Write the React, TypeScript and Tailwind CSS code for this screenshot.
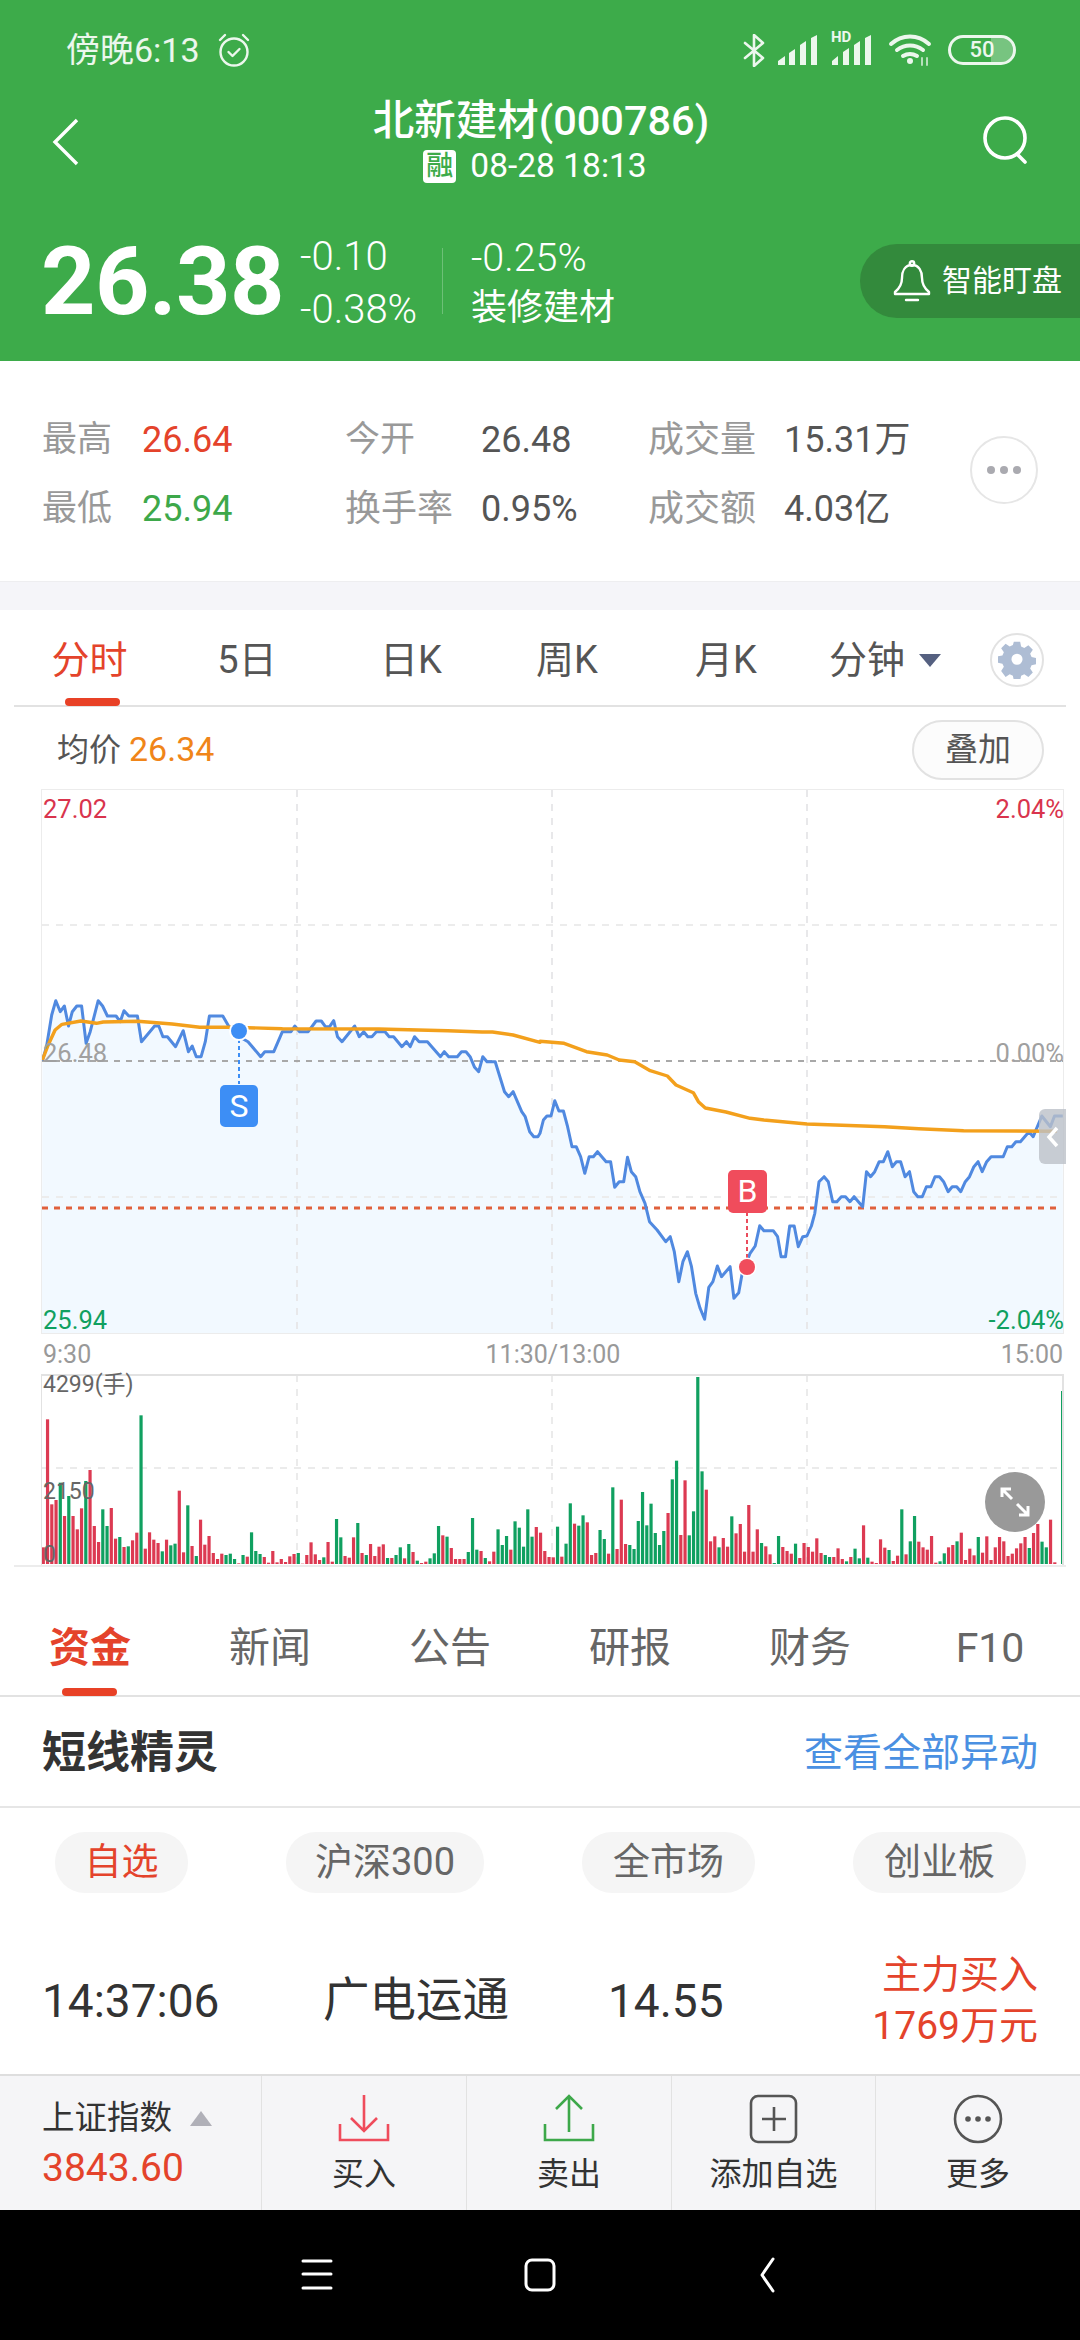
import React from "react";

const blueA = "123,242 135,200 150,105 162,62 175,95 187,78 199,138 210,95 223,78 237,78 250,190 262,155 285,62 298,78 312,108 337,108 349,125 360,92 374,108 399,108 411,185 449,138 461,138 473,170 486,170 510,200 532,152 547,215 558,198 570,230 584,230 596,185 608,108 647,108 665,140 695,170 720,185 757,230 769,215 795,215 820,155 845,155 856,138 870,155 895,155 918,123 933,123 945,140 957,140 969,122 980,170 993,185 1030,138 1043,170 1056,155 1068,170 1080,170 1093,155 1118,155 1130,170 1143,170 1167,200 1180,185 1191,200 1204,170 1217,185 1241,185 1279,230 1290,215 1303,230 1328,230 1340,215 1353,215 1365,230 1378,262 1390,275 1402,230 1414,245 1438,245 1465,335 1477,350 1490,335 1515,395 1525,410 1538,455 1550,470 1562,470";
const blueB = "0,460 10,420 20,408 32,408 43,362 55,393 68,393 80,440 93,500 105,500 118,530 130,580 143,530 155,530 167,515 192,545 205,545 217,622 230,605 243,605 254,532 265,575 278,590 290,635 305,670 318,725 340,750 365,785 378,770 390,815 403,905 415,845 428,815 440,860 452,940 465,985 478,1018 490,922 502,905 515,858 527,890 552,860 563,955 577,938 587,880 610,820 625,798 638,737 650,752 677,752 690,770 700,830 713,830 725,738 738,738 750,800 763,770 775,768 788,738 798,700 810,605 825,590 837,605 850,665 862,665 875,650 887,650 900,665 912,650 937,680 948,575 960,590 972,575 985,545 997,545 1010,515 1023,560 1035,545 1047,545 1060,590 1073,575 1085,635 1097,650 1110,650 1122,620 1135,620 1147,590 1160,590 1172,605 1185,635 1197,620 1210,620 1222,635 1235,605 1247,590 1260,560 1272,545 1284,575 1297,545 1310,530 1345,530 1357,500 1370,500 1382,485 1395,485 1420,455 1432,470 1457,408 1482,440 1494,408 1518,408";
const yellowA = "123,240 140,195 160,150 180,133 235,123 280,130 300,126 400,124 500,132 580,142 660,142 720,143 820,146 1100,147 1300,152 1400,156 1430,156 1490,165 1568,187";
const yellowB = "0,184 70,190 135,215 195,225 230,240 275,245 320,272 370,288 395,315 445,338 460,365 480,384 540,396 610,415 650,420 775,432 1000,440 1100,446 1230,452 1500,454";

const S = 1568 / 540;
const conv = (s: string, off: number) =>
  s.split(" ").map((p) => {
    const [x, y] = p.split(",").map(Number);
    return `${(off + x / S).toFixed(1)},${(980 + y / 3).toFixed(1)}`;
  });
const bluePts = [...conv(blueA, 0), ...conv(blueB, 540)];
const yellowPts = [...conv(yellowA, 0), ...conv(yellowB, 540)];
const fillPts = ["42,1333", ...bluePts, "1063,1333"].join(" ");

const vol =
  "r532 r148 r403 r390 g338 r438 g378 r438 r478 r415 g333 r300 r468 r516 g418 g468 r414 r506 g501 r531 g529 r511 r488 g136 r536 r487 r509 r519 g544 r509 g526 g521 r362 r547 g406 r528 g558 r449 r524 r498 r549 r567 r551 g555 g551 g567 r580 g555 r560 g487 g543 g552 r561 r578 r543 r577 r567 r576 r559 r552 g549 r581 r555 r517 r553 r570 g562 r516 r575 g447 g502 r558 r563 r502 g459 r549 g555 r522 r558 r530 r523 " +
  "g564 r564 g555 g532 r565 g522 r546 g572 r579 r575 g565 g550 g468 r496 g500 r534 r567 r567 r567 g546 g444 g539 r543 g564 r574 r545 g478 g525 g498 r539 g454 g473 g530 g418 g500 r471 r488 r543 r561 r562 g470 r560 g521 g400 r461 g467 g436 r457 r555 r549 g480 g507 r551 g352 r537 r389 r522 g525 g537 g453 g366 g466 g401 g489 g525 g483 r429 g328 g272 r495 r331 g496 g424 g21 g304 r359 r514 r499 g532 r504 r530 " +
  "g439 r490 r462 r545 r405 r545 r478 g519 r529 r553 g579 g498 r531 r543 r551 g521 r564 r519 r531 r545 r505 r549 g555 g561 r561 r535 r567 g574 r561 g536 g565 r466 g563 r575 r579 r508 r533 g540 r573 r557 g418 r553 g514 g438 r515 r532 r539 r498 r578 g574 g550 r532 r525 g514 r488 r570 r536 r556 g501 r548 r499 r570 r532 r501 r514 r558 r551 r535 r520 r501 g534 r489 r462 g515 g532 r449 r577";

const bars = vol.split(" ").map((t, i) => ({
  x: 43.3 + i * 4.25,
  top: 1370 + Number(t.slice(1)) / 3,
  red: t[0] === "r",
}));

function Volume() {
  return (
    <svg width="1080" height="193" viewBox="0 1374 1080 193" className="block">
      <line x1="42" x2="1063" y1="1468" y2="1468" stroke="#ebebeb" strokeWidth="2" strokeDasharray="7 7" />
      {[297, 552, 807].map((x) => (
        <line key={x} x1={x} x2={x} y1="1375" y2="1564" stroke="#ebebeb" strokeWidth="2" strokeDasharray="7 7" />
      ))}
      {bars.map((b, i) => (
        <rect key={i} x={b.x - 1.6} y={b.top} width="3.2" height={1564 - b.top} fill={b.red ? "#dc3a52" : "#10a060"} />
      ))}
      <rect x="1061" y="1391" width="2" height="173" fill="#10a060" />
    </svg>
  );
}

function Chart() {
  return (
    <svg width="1080" height="546" viewBox="0 789 1080 546" className="block">
      <polygon points={fillPts} fill="#f2f9ff" />
      {[925, 1197].map((y) => (
        <line key={y} x1="42" x2="1063" y1={y} y2={y} stroke="#ececec" strokeWidth="2" strokeDasharray="7 7" />
      ))}
      {[297, 552, 807].map((x) => (
        <line key={x} x1={x} x2={x} y1="790" y2="1332" stroke="#e8e8ea" strokeWidth="2" strokeDasharray="7 7" />
      ))}
      <line x1="42" x2="1063" y1="1061" y2="1061" stroke="#a8a8a8" strokeWidth="2" strokeDasharray="6 6" />
      <line x1="42" x2="1058" y1="1208" y2="1208" stroke="#e0603c" strokeWidth="3" strokeDasharray="6 6" />
      <polyline points={bluePts.join(" ")} fill="none" stroke="#5089e0" strokeWidth="3" strokeLinejoin="round" />
      <polyline points={yellowPts.join(" ")} fill="none" stroke="#f3a01c" strokeWidth="3.4" strokeLinejoin="round" />
      <line x1="239" x2="239" y1="1039" y2="1084" stroke="#3d8ef5" strokeWidth="2" strokeDasharray="4 3" />
      <circle cx="239" cy="1031" r="10" fill="#fff" />
      <circle cx="239" cy="1031" r="8" fill="#3d8ef5" />
      <line x1="747" x2="747" y1="1212" y2="1258" stroke="#ea4c5c" strokeWidth="2" strokeDasharray="4 3" />
      <circle cx="747" cy="1267" r="9.5" fill="#fff" />
      <circle cx="747" cy="1267" r="8" fill="#f04c5c" />
    </svg>
  );
}

const labelBase = "absolute text-[25.5px] leading-[30px]";

export default function App() {
  return (
    <div className="w-[1080px] h-[2340px] overflow-hidden bg-white flex flex-col font-['Roboto','Noto_Sans_CJK_SC',sans-serif]">
      {/* Header */}
      <header className="h-[361px] shrink-0 bg-[#3dab4a] text-white flex flex-col">
        <div className="h-[100px] flex items-center pl-[66px] pr-[64px] text-white/90">
          <span className="text-[34px] leading-none">傍晚6:13</span>
          <svg width="36" height="36" viewBox="0 0 36 36" className="ml-[16px]" fill="none" stroke="currentColor" strokeWidth="2.4" strokeLinecap="round" strokeLinejoin="round">
            <circle cx="18" cy="20" r="13.5" />
            <path d="M12.5 20l4 4 7-7" />
            <path d="M4 8l5-5M32 8l-5-5" />
          </svg>
          <div className="ml-auto flex items-center">
            <svg width="22" height="33" viewBox="0 0 22 33" fill="none" stroke="currentColor" strokeWidth="2.6" strokeLinejoin="round" strokeLinecap="round">
              <path d="M2 9l18 15-9 8V1l9 8L2 24" />
            </svg>
            <svg width="40" height="30" viewBox="0 0 40 30" fill="currentColor" className="ml-[13px]">
              <path d="M0 30v-4l7-5v9zM11 30V18l6-4v16zM22 30V10l6-4v24zM33 30V3l6-3v30z" />
            </svg>
            <div className="relative ml-[13px] w-[42px] h-[30px]">
              <svg width="42" height="30" viewBox="0 0 42 30" fill="currentColor" className="absolute inset-0">
                <path d="M1 30v-4l6-5v9zM12 30V17l6-4v17zM23 30V10l6-4v24zM34 30V3l6-3v30z" />
              </svg>
              <span className="absolute left-0 top-[-7px] text-[15px] leading-[18px] font-bold">HD</span>
            </div>
            <svg width="46" height="32" viewBox="0 0 46 32" fill="none" stroke="currentColor" strokeWidth="4" strokeLinecap="round" className="ml-[15px]">
              <path d="M3 10C14 0 30 0 41 10M9 16c8-6 18-6 26 0M15 22c5-3 9-3 14 0" />
              <circle cx="22" cy="27" r="3" fill="currentColor" stroke="none" />
              <path d="M34 24v7M39 31v-7" strokeWidth="2" opacity="0.7" />
            </svg>
            <div className="relative ml-[14px] w-[68px] h-[30px] rounded-full border-[3px] border-white/90 overflow-hidden flex items-center justify-center">
              <div className="absolute right-0 top-0 bottom-0 w-[22px] bg-white/30" />
              <span className="relative text-[22px] leading-none font-medium">50</span>
            </div>
          </div>
        </div>

        <div className="h-[90px] flex items-start justify-between pl-[50px] pr-[48px]">
          <div className="w-[50px] mt-[17px]">
            <svg width="30" height="50" viewBox="0 0 30 50" fill="none" stroke="currentColor" strokeWidth="3.4">
              <path d="M27 3L5 25l22 22" />
            </svg>
          </div>
          <div className="flex flex-col items-center">
            <div className="text-[41.5px] leading-[42px] font-medium whitespace-nowrap">北新建材(000786)</div>
            <div className="flex items-center mt-[7px] h-[34px] mr-[12px]">
              <span className="w-[33px] h-[33px] rounded-[4px] bg-white text-[#3dab4a] text-[27px] leading-[33px] text-center font-medium">融</span>
              <span className="ml-[14px] text-[33.500px] leading-none">08-28 18:13</span>
            </div>
          </div>
          <svg width="50" height="50" viewBox="0 0 50 50" fill="none" stroke="currentColor" strokeWidth="3.6" strokeLinecap="round" className="mt-[15px]">
            <circle cx="23" cy="23" r="20" />
            <path d="M35 39l8 8" />
          </svg>
        </div>

        <div className="mt-[44px] h-[94px] flex items-center pl-[41px]">
          <div className="w-[259px] text-[95px] leading-none font-bold tracking-[-0.5px]">26.38</div>
          <div className="w-[142px] flex flex-col text-[40px] leading-[53px] font-light pt-[4px]">
            <span>-0.10</span>
            <span>-0.38%</span>
          </div>
          <div className="w-px h-[66px] bg-white/25" />
          <div className="ml-[28px] flex flex-col text-[39.5px] leading-[50px] font-light pt-[3px]">
            <span>-0.25%</span>
            <span className="text-[36px] font-normal">装修建材</span>
          </div>
          <div className="ml-auto h-[74px] w-[220px] rounded-l-[37px] bg-[#338a3c] flex items-center pl-[33px]">
            <svg width="38" height="42" viewBox="0 0 38 42" fill="none" stroke="currentColor" strokeWidth="2.4" strokeLinejoin="round" strokeLinecap="round">
              <path d="M19 5c-7 0-10 6-10 13 0 6-2 10-7 14v2h34v-2c-5-4-7-8-7-14 0-7-3-13-10-13z" />
              <circle cx="19" cy="3.5" r="2.2" />
              <path d="M13 40h12" />
            </svg>
            <span className="ml-[11px] text-[30px] leading-none whitespace-nowrap">智能盯盘</span>
          </div>
        </div>
      </header>

      {/* Stats */}
      <section className="h-[220px] shrink-0 flex items-start justify-between pl-[42px] pr-[42px] pt-[44px] text-[36px]">
        <div className="grid grid-cols-[100px_203px_136px_167px_136px_auto] auto-rows-[69px] items-center leading-none">
          <span className="text-[#999] text-[35px]">最高</span>
          <span className="text-[#e4432b]">26.64</span>
          <span className="text-[#999] text-[35px]">今开</span>
          <span className="text-[#555]">26.48</span>
          <span className="text-[#999] text-[36px]">成交量</span>
          <span className="text-[#555]">15.31万</span>
          <span className="text-[#999] text-[35px]">最低</span>
          <span className="text-[#3da84a]">25.94</span>
          <span className="text-[#999] text-[36px]">换手率</span>
          <span className="text-[#555]">0.95%</span>
          <span className="text-[#999] text-[36px]">成交额</span>
          <span className="text-[#555]">4.03亿</span>
        </div>
        <div className="mt-[31px] w-[68px] h-[68px] rounded-full border-2 border-[#e6e6e6] flex items-center justify-center gap-[5px]">
          <i className="w-[8px] h-[8px] rounded-full bg-[#aaaab0]" />
          <i className="w-[8px] h-[8px] rounded-full bg-[#aaaab0]" />
          <i className="w-[8px] h-[8px] rounded-full bg-[#aaaab0]" />
        </div>
      </section>
      <div className="h-[29px] shrink-0 bg-[#f5f5f9] border-t border-[#eeeef0]" />

      {/* Chart tabs */}
      <div className="h-[97px] shrink-0 mx-[14px] border-b-2 border-[#e2e2e2] flex items-center text-[38px] text-[#555] relative pt-[5px]">
        <div className="w-[151px] text-center text-[#e4432b]">分时</div>
        <div className="w-[164px] text-center">5日</div>
        <div className="w-[164px] text-center">日K</div>
        <div className="w-[148px] text-center">周K</div>
        <div className="w-[170px] text-center">月K</div>
        <div className="ml-[18px]">分钟</div>
        <div className="ml-[14px] w-0 h-0 border-l-[11px] border-r-[11px] border-t-[13px] border-l-transparent border-r-transparent border-t-[#556080]" />
        <div className="ml-auto mr-[22px] w-[54px] h-[54px] rounded-full border-2 border-[#e2e2e2] flex items-center justify-center">
          <svg width="38" height="38" viewBox="0 0 24 24" fill="#aebdd4">
            <path fillRule="evenodd" d="M10 1h4l.6 3 2 .9 2.6-1.7 2.8 2.8-1.7 2.6.9 2 3 .6v4l-3 .6-.9 2 1.7 2.6-2.8 2.8-2.6-1.7-2 .9-.6 3h-4l-.6-3-2-.9-2.6 1.7L2 19.400l1.700-2.600-.9-2-3-.6v-4l3-.6.9-2L2 5l2.800-2.800L7.400 3.900l2-.9zM12 8.500a3.500 3.500 0 1 0 0 7 3.500 3.500 0 0 0 0-7z" transform="translate(0 -0.500)" />
          </svg>
        </div>
        <div className="absolute left-[51px] bottom-[-1px] w-[55px] h-[8px] rounded-[4px] bg-[#e84126]" />
      </div>

      {/* Average row */}
      <div className="h-[82px] shrink-0 flex items-center pl-[57px] pr-[36px] text-[32px] pt-[3px]">
        <span className="text-[#555]">均价</span>
        <span className="ml-[8px] text-[34px] text-[#f08519]">26.34</span>
        <div className="ml-auto w-[132px] h-[60px] rounded-full border-2 border-[#e2e2e2] bg-[#fcfcfc] flex items-center justify-center text-[33px] text-[#555]">叠加</div>
      </div>

      {/* Main chart */}
      <div className="relative h-[546px] shrink-0">
        <div className="absolute left-[41px] top-0 w-[1023px] h-[545px] border border-[#ececec]" />
        <Chart />
        <span className={`${labelBase} left-[43px] top-[5px] text-[#d9344d]`}>27.02</span>
        <span className={`${labelBase} right-[16px] top-[5px] text-[#d9344d]`}>2.04%</span>
        <span className={`${labelBase} left-[43px] top-[249px] text-[#a0a0a0]`}>26.48</span>
        <span className={`${labelBase} right-[16px] top-[249px] text-[#a0a0a0]`}>0.00%</span>
        <span className={`${labelBase} left-[43px] top-[516px] text-[#10a060]`}>25.94</span>
        <span className={`${labelBase} right-[16px] top-[516px] text-[#10a060]`}>-2.04%</span>
        <div className="absolute left-[220px] top-[296px] w-[38px] h-[42px] rounded-[5px] bg-[#3d8ef5] text-white text-[32px] leading-[42px] text-center">S</div>
        <div className="absolute left-[728px] top-[381px] w-[39px] h-[43px] rounded-[5px] bg-[#f04c5c] text-white text-[32px] leading-[43px] text-center">B</div>
        <div className="absolute left-[1039px] top-[320px] w-[27px] h-[55px] rounded-l-[6px] bg-[#bcc0c8]/80 flex items-center justify-center">
          <svg width="14" height="22" viewBox="0 0 14 22" fill="none" stroke="#fff" strokeWidth="3.500">
            <path d="M11 2L3 11l8 9" />
          </svg>
        </div>
      </div>

      {/* Time axis */}
      <div className="h-[39px] shrink-0 flex items-center justify-between pl-[43px] pr-[17px] text-[25px] text-[#999]">
        <span>9:30</span>
        <span className="ml-[14px]">11:30/13:00</span>
        <span>15:00</span>
      </div>

      {/* Volume */}
      <div className="relative h-[193px] shrink-0">
        <div className="absolute left-[41px] top-0 w-[1023px] h-[191px] border-t-2 border-r-2 border-l border-[#e2e2e2]" />
        <Volume />
        <div className="absolute left-[14px] right-[14px] top-[191px] h-[2px] bg-[#ececec]" />
        <span className="absolute left-[43px] top-[-4px] text-[23px] leading-[30px] text-[#666]">4299(手)</span>
        <span className="absolute left-[43px] top-[103px] text-[23px] leading-[30px] text-[#666]">2150</span>
        <span className="absolute left-[43px] top-[166px] text-[23px] leading-[30px] text-[#666]">0</span>
        <div className="absolute left-[985px] top-[98px] w-[60px] h-[60px] rounded-full bg-[#999] flex items-center justify-center">
          <svg width="34" height="34" viewBox="0 0 34 34" fill="none" stroke="#fff" strokeWidth="3">
            <path d="M4 12V4h9M4 4l10 10M30 21v9h-9M30 30L19 19" />
          </svg>
        </div>
      </div>

      {/* Section tabs */}
      <div className="relative h-[130px] shrink-0 border-b-2 border-[#e2e2e2] grid grid-cols-6 items-center text-[41px] text-[#666] pt-[36px]">
        <div className="text-center font-bold text-[#e4432b]">资金</div>
        <div className="text-center">新闻</div>
        <div className="text-center">公告</div>
        <div className="text-center">研报</div>
        <div className="text-center">财务</div>
        <div className="text-center">F10</div>
        <div className="absolute left-[62px] bottom-[-1px] w-[55px] h-[8px] rounded-[4px] bg-[#e84126]" />
      </div>

      {/* Title row */}
      <div className="h-[111px] shrink-0 border-b-2 border-[#e6e6e6] flex items-center justify-between pl-[42px] pr-[42px] pt-[3px]">
        <span className="text-[44px] font-bold text-[#333]">短线精灵</span>
        <span className="text-[39px] text-[#4a90e2]">查看全部异动</span>
      </div>

      {/* Pills */}
      <div className="h-[85px] shrink-0 flex items-end pl-[55px] gap-[98px] text-[37px] text-[#666]">
        <div className="w-[133px] h-[61px] rounded-[30px] bg-[#f5f5f5] flex items-center justify-center text-[#e4432b]">自选</div>
        <div className="w-[198px] h-[61px] rounded-[30px] bg-[#f5f5f5] flex items-center justify-center text-[38px]">沪深300</div>
        <div className="w-[173px] h-[61px] rounded-[30px] bg-[#f5f5f5] flex items-center justify-center">全市场</div>
        <div className="w-[173px] h-[61px] rounded-[30px] bg-[#f5f5f5] flex items-center justify-center">创业板</div>
      </div>

      {/* Record row */}
      <div className="flex-1 min-h-0 flex items-center pl-[42px] pr-[42px] pt-[34px] text-[#333]">
        <div className="w-[281px] text-[46px] leading-none">14:37:06</div>
        <div className="w-[285px] text-[46.500px] leading-none">广电运通</div>
        <div className="text-[46px] leading-none">14.55</div>
        <div className="ml-auto text-right text-[39px] leading-[51px] text-[#e4432b]">
          <div>主力买入</div>
          <div>1769万元</div>
        </div>
      </div>

      {/* Footer */}
      <footer className="h-[136px] shrink-0 bg-[#f5f5f7] border-t-2 border-[#dedede] flex text-[32px] text-[#333]">
        <div className="w-[262px] pl-[42px] border-r border-[#e2e2e2] flex flex-col">
          <div className="mt-[21px] flex items-center h-[42px]">
            <span className="text-[32.500px] leading-none">上证指数</span>
            <span className="ml-[18px] w-0 h-0 border-l-[11px] border-r-[11px] border-b-[15px] border-l-transparent border-r-transparent border-b-[#b0b0b8]" />
          </div>
          <span className="mt-[10px] text-[39px] leading-none text-[#e4432b]">3843.60</span>
        </div>
        <FootItem label="买入" w="w-[205px]">
          <svg width="52" height="50" viewBox="0 0 52 50" fill="none" stroke="#ef4c5c" strokeWidth="2.600">
            <path d="M26 1v34M13 24l13 13 13-13M2 30v16h48V30" />
          </svg>
        </FootItem>
        <FootItem label="卖出" w="w-[205px]">
          <svg width="52" height="50" viewBox="0 0 52 50" fill="none" stroke="#3da84a" strokeWidth="2.600">
            <path d="M26 38V3M13 15L26 2l13 13M2 30v16h48V30" />
          </svg>
        </FootItem>
        <FootItem label="添加自选" w="w-[204px]">
          <svg width="50" height="50" viewBox="0 0 50 50" fill="none" stroke="#555" strokeWidth="2.600">
            <rect x="2" y="2" width="45" height="46" rx="7" />
            <path d="M25 13v24M13 25h24" />
          </svg>
        </FootItem>
        <FootItem label="更多" w="w-[204px]" last>
          <svg width="50" height="50" viewBox="0 0 50 50" fill="none" stroke="#555" strokeWidth="2.600">
            <circle cx="25" cy="25" r="23" />
            <circle cx="15" cy="25" r="2.800" fill="#555" stroke="none" />
            <circle cx="25" cy="25" r="2.800" fill="#555" stroke="none" />
            <circle cx="35" cy="25" r="2.800" fill="#555" stroke="none" />
          </svg>
        </FootItem>
      </footer>

      {/* Nav bar */}
      <nav className="h-[130px] shrink-0 bg-black relative flex items-start">
        <svg width="1080" height="130" viewBox="0 2210 1080 130" fill="none" stroke="#fff" strokeWidth="3" strokeLinecap="round" strokeLinejoin="round">
          <path d="M303 2261h28M303 2274h28M303 2288h28" />
          <rect x="526" y="2260" width="28" height="30" rx="6" />
          <path d="M773 2259l-11 16 11 16" />
        </svg>
      </nav>
    </div>
  );
}

function FootItem({ label, w, last, children }: { label: string; w: string; last?: boolean; children: React.ReactNode }) {
  return (
    <div className={`${w} ${last ? "" : "border-r border-[#e2e2e2]"} flex flex-col items-center pt-[18px]`}>
      {children}
      <span className="mt-[11px] leading-[38px]">{label}</span>
    </div>
  );
}
